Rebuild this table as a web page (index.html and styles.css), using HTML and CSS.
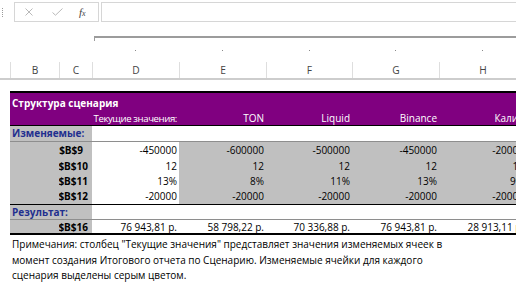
FILE: index.html
```html
<!DOCTYPE html>
<html lang="ru">
<head>
<meta charset="utf-8">
<link rel="stylesheet" href="styles.css">
</head>
<body>
<div class="fbar">
  <div class="grip"></div>
  <div class="fbtns">
    <svg class="ic-x" width="8" height="8" viewBox="0 0 8 8"><path d="M0.5 0.5L7.5 7.5M7.5 0.5L0.5 7.5" stroke="#b9b9b9" stroke-width="1" fill="none"/></svg>
    <svg class="ic-ok" width="11" height="8" viewBox="0 0 11 8"><path d="M0.5 4.5L3.5 7.2L10.5 0.5" stroke="#b9b9b9" stroke-width="1" fill="none"/></svg>
    <span class="fx">f<span class="fx-x">x</span></span>
  </div>
  <div class="finput"></div>
</div>
<div class="outline">
  <div class="bracket"></div>
  <div class="cols dots">
    <span></span><span></span><span></span>
    <span class="dot"></span><span class="dot"></span><span class="dot"></span><span class="dot"></span><span class="dot"></span>
  </div>
</div>
<div class="cols colhdr">
  <div class="ch ch-a"></div>
  <div class="ch">B</div>
  <div class="ch">C</div>
  <div class="ch">D</div>
  <div class="ch">E</div>
  <div class="ch">F</div>
  <div class="ch">G</div>
  <div class="ch">H</div>
</div>
<div class="blank"></div>
<div class="table">
  <div class="row title">
    <div class="c ttl">Структура сценария</div>
  </div>
  <div class="row head">
    <div class="c"></div><div class="c"></div>
    <div class="c r cur">Текущие значения:</div>
    <div class="c r">TON</div>
    <div class="c r">Liquid</div>
    <div class="c r">Binance</div>
    <div class="c r"><span class="hcut">Калина</span></div>
  </div>
  <div class="row sect sect-izm">
    <div class="c span2 g lbl">Изменяемые:</div>
    <div class="c"></div><div class="c"></div><div class="c"></div><div class="c"></div><div class="c"></div>
  </div>
  <div class="row data">
    <div class="c g"></div><div class="c g r b nm nm9">$B$9</div>
    <div class="c r">-450000</div>
    <div class="c g r">-600000</div>
    <div class="c g r">-500000</div>
    <div class="c g r">-450000</div>
    <div class="c g r">-20000</div>
  </div>
  <div class="row data">
    <div class="c g"></div><div class="c g r b nm">$B$10</div>
    <div class="c r">12</div>
    <div class="c g r">12</div>
    <div class="c g r">12</div>
    <div class="c g r">12</div>
    <div class="c g r">12</div>
  </div>
  <div class="row data short">
    <div class="c g"></div><div class="c g r b nm">$B$11</div>
    <div class="c r">13%</div>
    <div class="c g r">8%</div>
    <div class="c g r">11%</div>
    <div class="c g r">13%</div>
    <div class="c g r">9%</div>
  </div>
  <div class="row data short">
    <div class="c g"></div><div class="c g r b nm">$B$12</div>
    <div class="c r">-20000</div>
    <div class="c g r">-20000</div>
    <div class="c g r">-20000</div>
    <div class="c g r">-20000</div>
    <div class="c g r">-20000</div>
  </div>
  <div class="row sect-res">
    <div class="c span2 g lbl">Результат:</div>
    <div class="c"></div><div class="c"></div><div class="c"></div><div class="c"></div><div class="c"></div>
  </div>
  <div class="row last">
    <div class="c g"></div><div class="c g r b nm">$B$16</div>
    <div class="c r">76 943,81 р.</div>
    <div class="c r">58 798,22 р.</div>
    <div class="c r">70 336,88 р.</div>
    <div class="c r">76 943,81 р.</div>
    <div class="c r">28 913,11 р.</div>
  </div>
</div>
<div class="notes">
  <p>Примечания: столбец "Текущие значения" представляет значения изменяемых ячеек в</p>
  <p>момент создания Итогового отчета по Сценарию. Изменяемые ячейки для каждого</p>
  <p>сценария выделены серым цветом.</p>
</div>
</body>
</html>
```

FILE: styles.css
```css
* { box-sizing: border-box; margin: 0; padding: 0; }
html, body { width: 516px; height: 289px; overflow: hidden; background: #fff; }
body {
  font-family: "Open Sans", "Noto Sans", sans-serif;
  font-size: 10px;
  color: #000;
}

/* formula bar */
.fbar { height: 24px; display: flex; align-items: flex-start; padding-top: 2px; }
.grip { width: 1px; height: 9px; margin: 6px 11px 0 2px; border-left: 1px dotted #9a9a9a; }
.fbtns {
  width: 85px; height: 20px; border: 1px solid #d6d6d6;
  display: flex; align-items: center; flex: none;
}
.ic-x { margin-left: 10px; }
.ic-ok { margin-left: 19px; }
.fx {
  margin-left: 16px; font-family: "Liberation Serif", serif; font-style: italic;
  font-size: 11px; color: #444; line-height: 1;
}
.fx-x { font-size: 8px; }
.finput { flex: 1; height: 20px; border: 1px solid #d6d6d6; border-right: none; margin-left: 2px; }

/* outline area */
.outline { height: 38px; padding-top: 12px; }
.bracket { margin-left: 94px; height: 5px; border-top: 2px solid #9c9c9c; border-left: 1px solid #9c9c9c; }
.cols { display: grid; grid-template-columns: 10px 49px 33px 87px 87px 86px 87px 87px; }
.dots { margin-top: 9px; height: 3px; }
.dot { justify-self: center; width: 1px; height: 1px; background: #8a8a8a; }

/* column headers */
.colhdr { height: 18px; border-bottom: 2px solid #cdcdcd; }
.ch {
  border-left: 1px solid #dedede; text-align: center; color: #444;
  font-size: 10.2px; line-height: 16px;
}
.ch-a { border-left: none; }

.blank { height: 11px; }

/* table */
.table { margin-left: 10px; width: 530px; }
.row { display: grid; grid-template-columns: 49px 33px 87px 87px 86px 87px 87px; }
.c { line-height: 16px; height: 16px; white-space: nowrap; overflow: hidden; padding: 0 2px; }
.span2 { grid-column: span 2; overflow: visible; }
.r { display: flex; justify-content: flex-end; }
.b { font-weight: 700; }
.g { background: #c0c0c0; }
.nm { padding-right: 4px; }
.nm9 { padding-right: 9px; }

.title { background: #800080; border-top: 2px solid #000; }
.ttl { color: #fff; font-weight: 700; grid-column: span 7; height: 18px; line-height: 21px; overflow: visible; }
.head { background: #800080; border-bottom: 1px solid #000; color: #fff; }
.head .c { height: 14px; line-height: 15px; overflow: visible; }
.cur { font-size: 9.6px; letter-spacing: -0.4px; }
.hcut { margin-right: -6px; }

.sect-izm .c { height: 15px; line-height: 15px; }
.lbl { color: #1f2f8f; font-weight: 700; }
.sect-izm { border-bottom: 1px solid #8e8e8e; }
.short .c { height: 15px; line-height: 15px; }
.sect-res { border-top: 1px solid #000; border-bottom: 1px solid #8e8e8e; }
.sect-res .c { height: 14px; line-height: 14px; }
.last { border-bottom: 2px solid #000; }
.last .c { height: 13px; line-height: 15px; }

/* notes */
.notes { margin-left: 12px; padding-top: 2px; }
.notes p { white-space: nowrap; line-height: 15.5px; }
```
